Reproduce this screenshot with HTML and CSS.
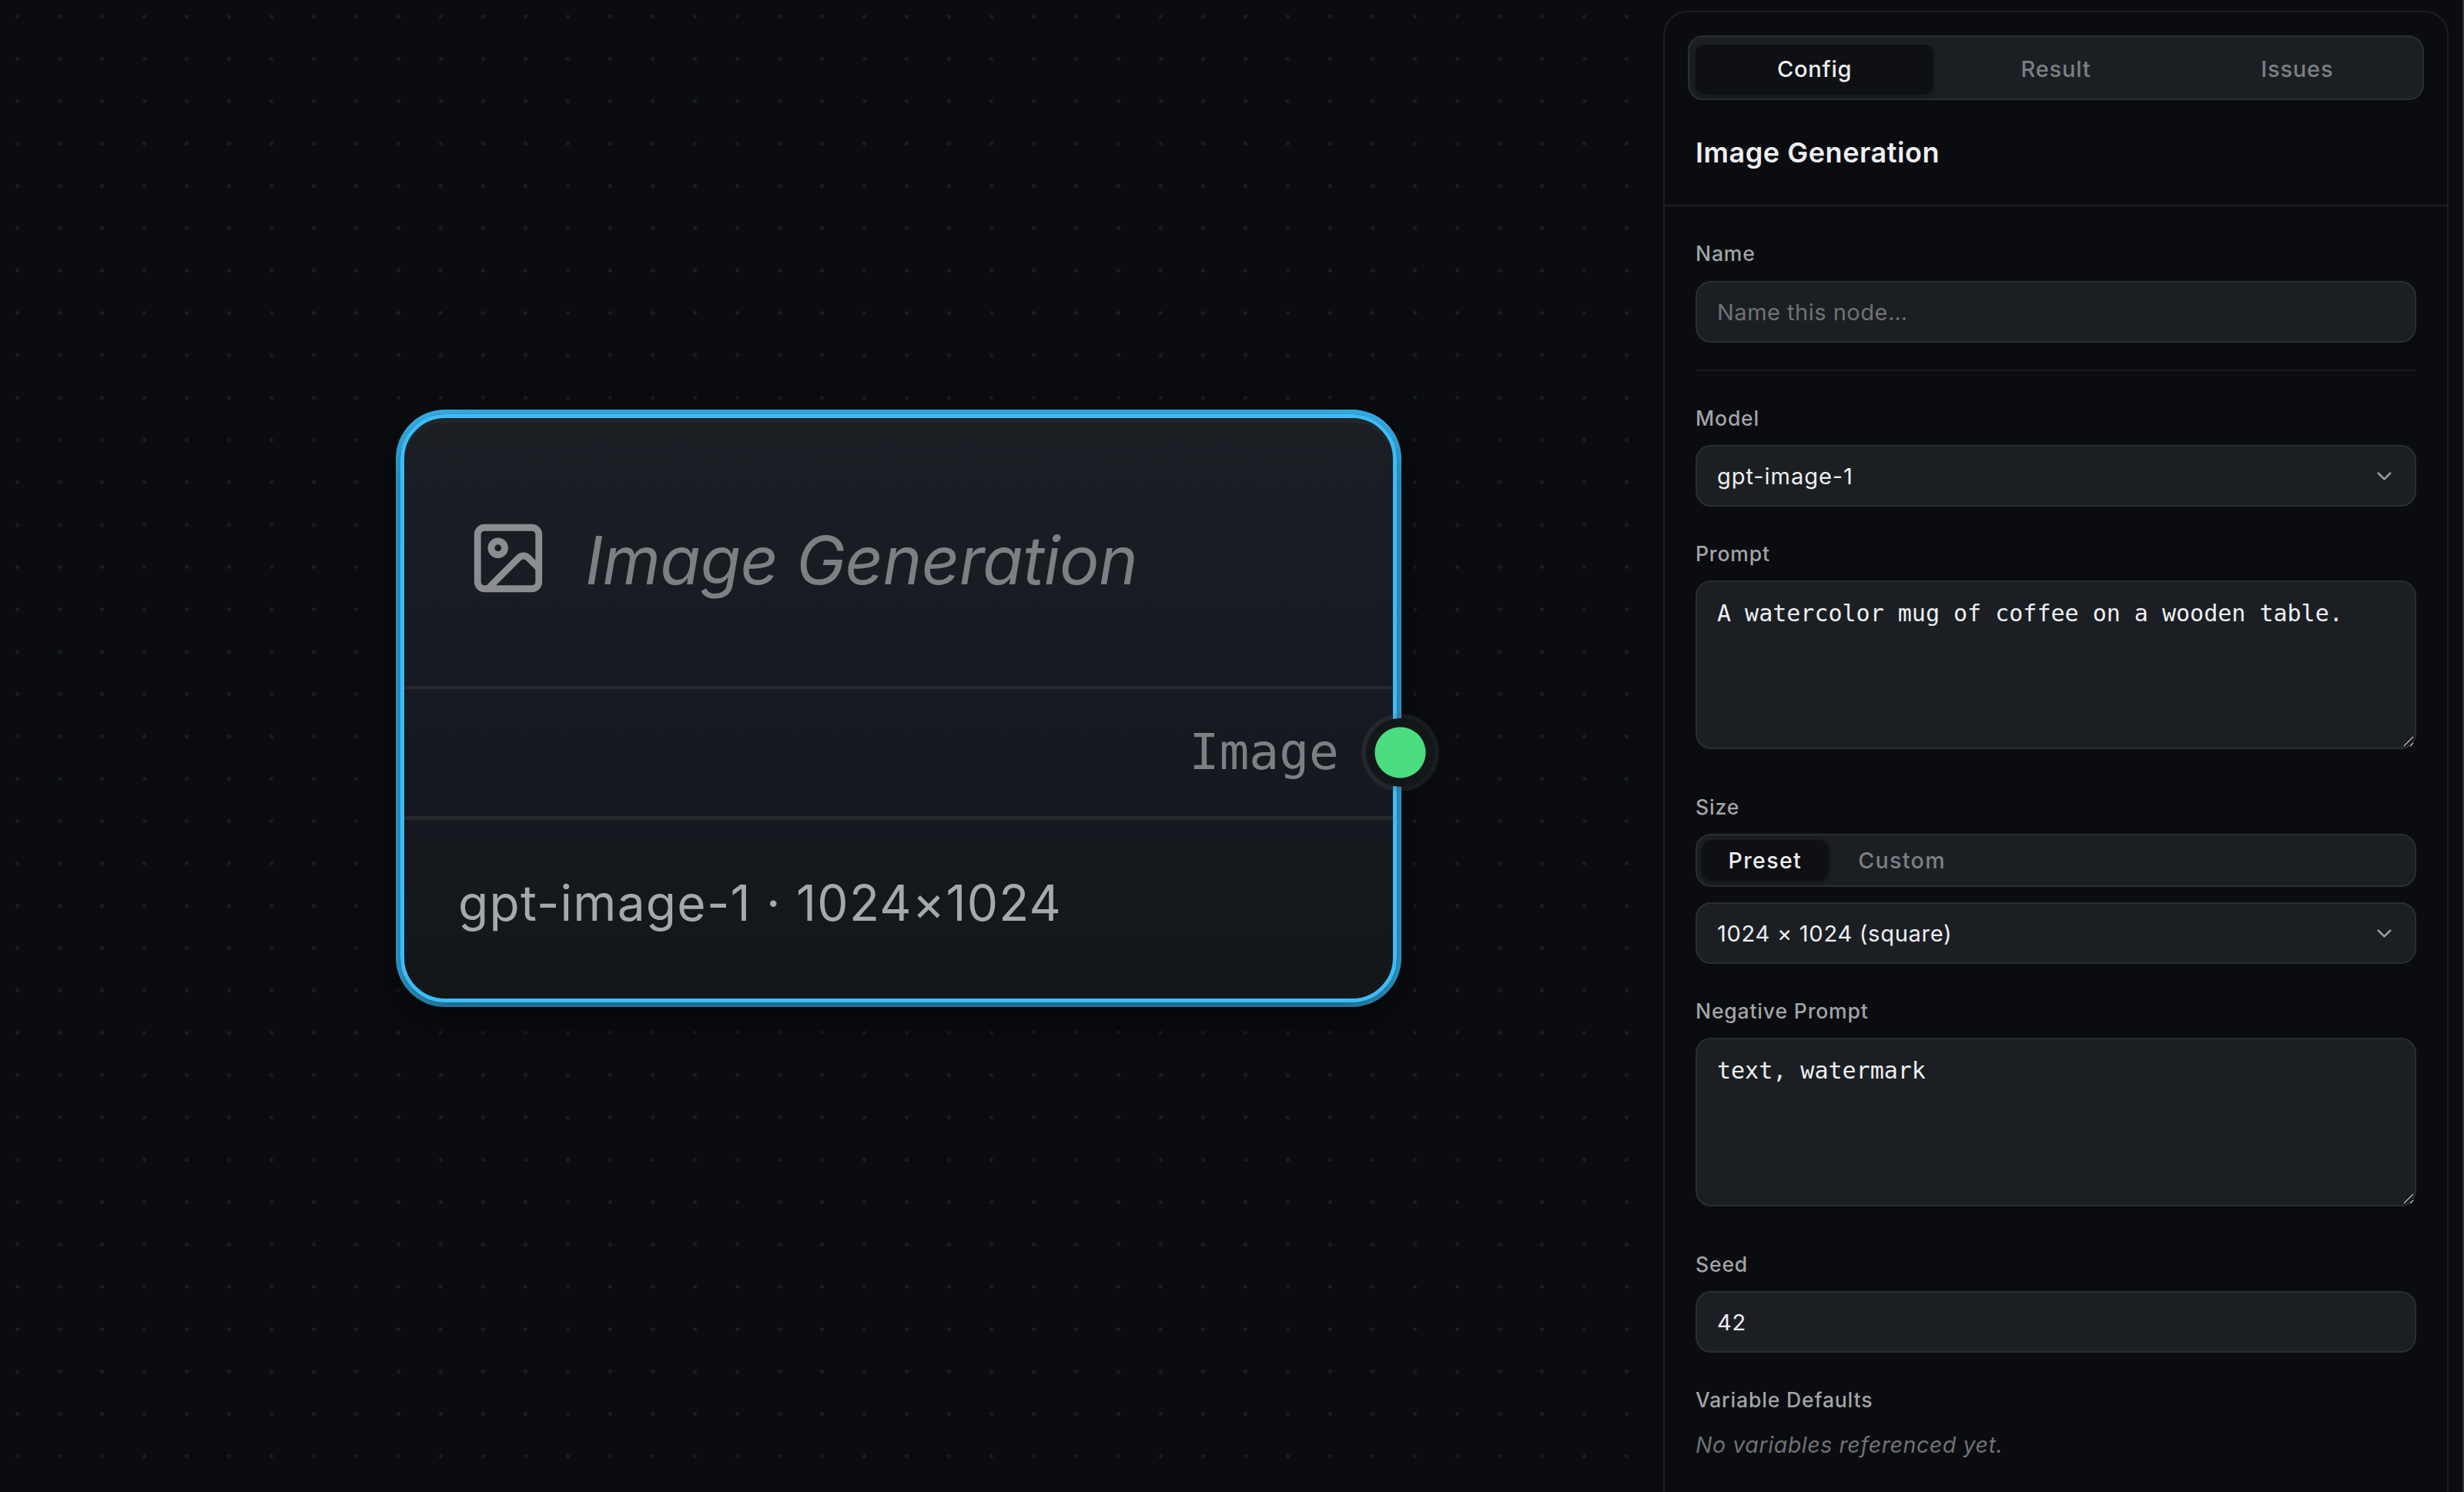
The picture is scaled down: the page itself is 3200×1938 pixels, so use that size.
FILE: index.html
```html
<!DOCTYPE html>
<html lang="en">
<head>
<meta charset="utf-8">
<title>Image Generation</title>
<link rel="stylesheet" href="styles.css">
</head>
<body>
<main class="app">
  <section class="canvas">
    <article class="node">
      <header class="node-header">
        <svg class="node-icon" viewBox="0 0 24 24" fill="none" stroke="currentColor" stroke-width="2" stroke-linecap="round" stroke-linejoin="round"><rect x="3" y="3" width="18" height="18" rx="2"/><circle cx="9" cy="9" r="2"/><path d="m21 15-3.086-3.086a2 2 0 0 0-2.828 0L6 21"/></svg>
        <span class="node-title">Image Generation</span>
      </header>
      <div class="node-port"><span>Image</span><i class="handle"></i></div>
      <footer class="node-summary">gpt-image-1 · 1024×1024</footer>
    </article>
  </section>
  <aside class="panel">
    <nav class="tabs">
      <button class="tab active">Config</button>
      <button class="tab">Result</button>
      <button class="tab">Issues</button>
    </nav>
    <h2 class="panel-title">Image Generation</h2>
    <div class="form">
      <div class="field name-field">
        <label>Name</label>
        <div class="control placeholder">Name this node…</div>
      </div>
      <div class="field">
        <label>Model</label>
        <div class="control select model"><span>gpt-image-1</span><svg class="chevron" viewBox="0 0 24 24"><path d="m6 9 6 6 6-6"/></svg></div>
      </div>
      <div class="field">
        <label>Prompt</label>
        <div class="control area"><span>A watercolor mug of coffee on a wooden table.</span><svg class="grip" viewBox="0 0 14 14"><path class="grip-shade" d="M1 13 13 1M9 13l4-4"/><path d="M1 13 13 1M9 13l4-4"/></svg></div>
      </div>
      <div class="field">
        <label>Size</label>
        <div class="segment"><button class="seg active">Preset</button><button class="seg">Custom</button></div>
        <div class="control select"><span>1024 × 1024 (square)</span><svg class="chevron" viewBox="0 0 24 24"><path d="m6 9 6 6 6-6"/></svg></div>
      </div>
      <div class="field">
        <label>Negative Prompt</label>
        <div class="control area"><span>text, watermark</span><svg class="grip" viewBox="0 0 14 14"><path class="grip-shade" d="M1 13 13 1M9 13l4-4"/><path d="M1 13 13 1M9 13l4-4"/></svg></div>
      </div>
      <div class="field">
        <label>Seed</label>
        <div class="control">42</div>
      </div>
      <div class="field">
        <label>Variable Defaults</label>
        <p class="empty">No variables referenced yet.</p>
      </div>
    </div>
  </aside>
</main>
</body>
</html>
```
FILE: styles.css
```css
* { box-sizing: border-box; }
body {
  margin: 0;
  background: #0a0c10;
  color: #eeeff1;
  font-family: Inter, "Liberation Sans", sans-serif;
  font-size: 28px;
  overflow: hidden;
}
button { border: 0; padding: 0; background: none; font: inherit; letter-spacing: inherit; color: inherit; }
.app {
  display: flex;
  width: 3200px;
  height: 1938px;
  overflow: hidden;
  border-right: 2px solid #2f3135;
}
.canvas {
  position: relative;
  flex: 1;
  background-image: radial-gradient(circle at center, #1a1c1f 0 2px, transparent 3.3px);
  background-size: 55px 55px;
  background-position: -5px -6px;
}
.node {
  position: absolute;
  left: 520px;
  top: 538px;
  width: 1294px;
  height: 764px;
  border: 5px solid #3dbcf9;
  border-radius: 58px;
  background: linear-gradient(#1b1f24, #181a22 42%, #16181f 65%, #131719);
  box-shadow: inset 0 6px 0 rgba(255,255,255,.03), 0 18px 55px rgba(0,0,0,.6), 0 0 0 6px #38bdf8;
}
.node-header {
  display: flex;
  align-items: center;
  gap: 47px;
  height: 352px;
  padding: 15px 0 0 82px;
  border-bottom: 4px solid #26282b;
}
.node-icon { width: 106px; height: 106px; color: #8b8d91; }
.node-title {
  padding-top: 6px;
  font-size: 86px;
  font-style: italic;
  letter-spacing: -.6px;
  color: #7d7f83;
  white-space: nowrap;
}
.node-port {
  position: relative;
  display: flex;
  align-items: center;
  justify-content: flex-end;
  height: 170px;
  padding: 0 70px 2px 0;
  border-bottom: 5px solid #26282b;
  font: 64.6px "DejaVu Sans Mono", monospace;
  color: #7d7f83;
}
.handle {
  position: absolute;
  right: -60px;
  top: 32px;
  width: 101px;
  height: 101px;
  border-radius: 50%;
  border: 6px solid rgba(90,95,100,.2);
  background: radial-gradient(circle, #4ade80 0 32.5px, #14171a 33.5px) padding-box;
}
.node-summary { padding: 69px 0 0 70px; font-size: 64px; letter-spacing: 1.25px; color: #a7a8ab; }
.panel {
  display: flex;
  flex-direction: column;
  width: 1020px;
  height: 1960px;
  margin: 14px 18px 0 0;
  border: 2px solid #1c1e22;
  border-radius: 32px;
  background: #0a0c10;
}
.tabs {
  display: grid;
  grid-template-columns: repeat(3, 1fr);
  gap: 4px;
  height: 84px;
  margin: 30px 30px 0;
  padding: 10px 8px 6px;
  border: 2px solid #2a2d31;
  border-radius: 20px;
  background: #1b1f24;
  font-size: 29px;
  font-weight: 500;
  letter-spacing: .8px;
}
.tab { padding-bottom: 1px; color: #7d7f83; border-radius: 12px; }
.active { color: #eeeff1; background: #0e1014; box-shadow: 0 2px 6px rgba(0,0,0,.4); }
.panel-title {
  margin: 0;
  padding: 46px 40px 0;
  height: 138px;
  border-bottom: 2px solid #1c1e22;
  font-size: 36px;
  line-height: 44px;
  font-weight: 600;
  letter-spacing: .55px;
}
.form { display: flex; flex-direction: column; gap: 41px; padding: 42px 40px 0; }
.field { display: flex; flex-direction: column; }
.field label {
  margin-bottom: 15px;
  font-size: 26.5px;
  font-weight: 500;
  line-height: 40px;
  letter-spacing: .85px;
  color: #a2a4a7;
}
.name-field { padding-bottom: 35px; border-bottom: 2px solid #17191d; }
.name-field label { line-height: 39px; margin-bottom: 16px; }
.control {
  position: relative;
  display: flex;
  align-items: center;
  height: 80px;
  padding: 0 26px;
  border: 2px solid #2a2d31;
  border-radius: 20px;
  background: #1b1f24;
  font-size: 29px;
  letter-spacing: .75px;
}
.placeholder { color: #707276; letter-spacing: .5px; }
.select { justify-content: space-between; }
.model { letter-spacing: .95px; }
.chevron {
  width: 31px;
  height: 31px;
  margin-right: -1.5px;
  fill: none;
  stroke: #9a9fa8;
  stroke-width: 2;
  stroke-linecap: round;
  stroke-linejoin: round;
}
.area {
  height: 219px;
  margin-bottom: 14px;
  align-items: flex-start;
  padding-top: 20px;
  font: 30px/42px "DejaVu Sans Mono", monospace;
  letter-spacing: 0;
}
.grip {
  position: absolute;
  right: 1px;
  bottom: 1px;
  width: 14px;
  height: 14px;
  overflow: visible;
  fill: none;
  stroke: #b4b6b9;
  stroke-width: 1.6;
}
.grip-shade { stroke: #0c0e11; stroke-width: 4; }
.segment {
  display: flex;
  gap: 4px;
  height: 69px;
  margin-bottom: 20px;
  padding: 6px;
  border: 2px solid #2a2d31;
  border-radius: 20px;
  background: #1b1f24;
  font-size: 28.5px;
  font-weight: 500;
  letter-spacing: 1.4px;
}
.seg { padding: 0 34.5px; color: #7d7f83; border-radius: 14px; }
.seg.active { color: #eeeff1; }
.empty {
  margin: 6px 0 0;
  font-size: 28.5px;
  font-style: italic;
  letter-spacing: .58px;
  color: #707276;
}
```
